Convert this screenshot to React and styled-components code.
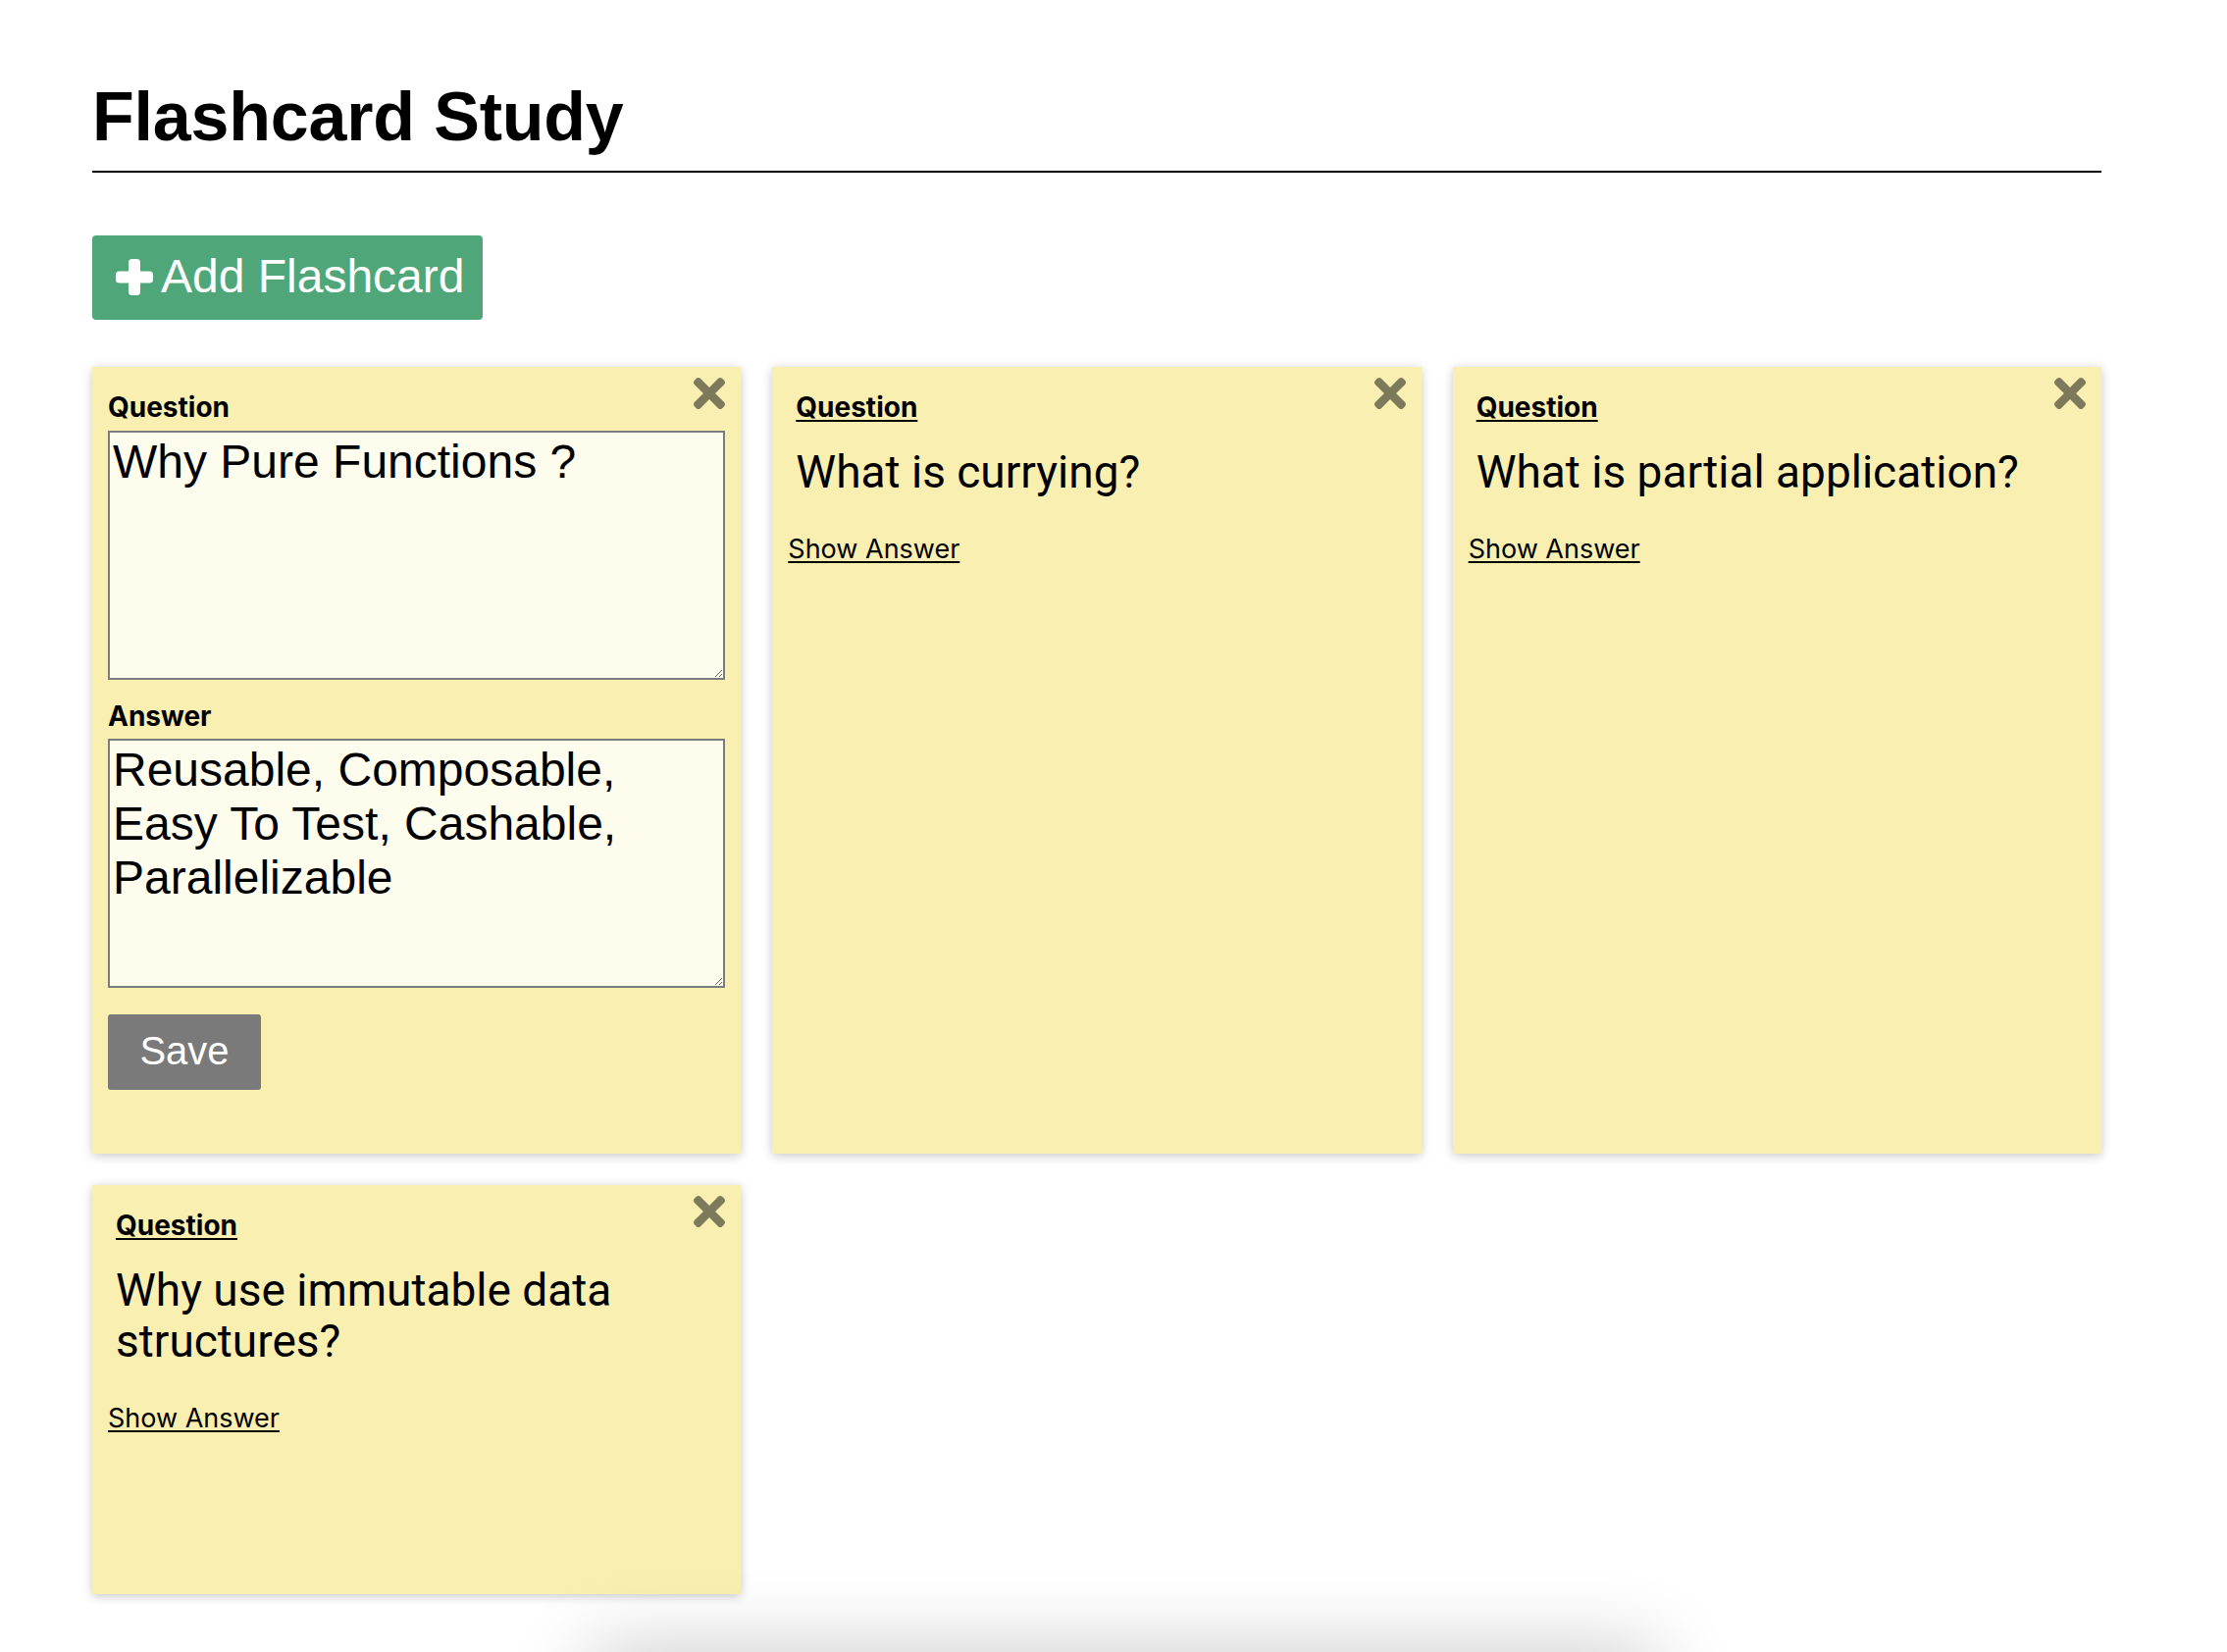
import React, { useState } from "react";
import styled, { createGlobalStyle } from "styled-components";

const GlobalStyle = createGlobalStyle`
  html, body {
    margin: 0;
    padding: 0;
    background: #ffffff;
  }
  body {
    font-family: Inter, "Liberation Sans", sans-serif;
    color: #000000;
  }
  * {
    box-sizing: border-box;
  }
`;

const initialCards = [
  {
    id: 1,
    question: "Why Pure Functions ?",
    answer: "Reusable, Composable, Easy To Test, Cashable, Parallelizable",
    editing: true,
  },
  {
    id: 2,
    question: "What is currying?",
    answer: "Turning a function of many arguments into a chain of one-argument functions.",
  },
  {
    id: 3,
    question: "What is partial application?",
    answer: "Fixing some arguments of a function to get a new one.",
  },
  {
    id: 4,
    question: "Why use immutable data structures?",
    answer: "Predictable state, safe sharing, cheap change detection.",
  },
];

const TimesIcon = () => (
  <svg width="32" height="32" viewBox="0 80 352 352" aria-hidden="true">
    <path
      fill="currentColor"
      d="M242.72 256l100.07-100.07c12.28-12.28 12.28-32.19 0-44.48l-22.24-22.24c-12.28-12.28-32.19-12.28-44.48 0L176 189.28 75.93 89.21c-12.28-12.28-32.19-12.28-44.48 0L9.21 111.45c-12.28 12.28-12.28 32.19 0 44.48L109.28 256 9.21 356.07c-12.28 12.28-12.28 32.19 0 44.48l22.24 22.24c12.28 12.28 32.2 12.28 44.48 0L176 322.72l100.07 100.07c12.28 12.28 32.2 12.28 44.48 0l22.24-22.24c12.28-12.28 12.28-32.19 0-44.48L242.72 256z"
    />
  </svg>
);

const PlusIcon = () => (
  <svg width="38" height="37" viewBox="0 0 38 37" aria-hidden="true">
    <rect x="13" y="0" width="12" height="37" rx="3.5" fill="currentColor" />
    <rect x="0" y="12.5" width="38" height="12" rx="3.5" fill="currentColor" />
  </svg>
);

const Card = ({ card, onRemove, onSave }) => {
  const [question, setQuestion] = useState(card.question);
  const [answer, setAnswer] = useState(card.answer);
  const [showAnswer, setShowAnswer] = useState(false);

  return (
    <CardBox>
      <CloseButton onClick={() => onRemove(card.id)} aria-label="Delete">
        <TimesIcon />
      </CloseButton>
      {card.editing ? (
        <EditForm onSubmit={(e) => { e.preventDefault(); onSave(card.id, question, answer); }}>
          <Label as="label">Question</Label>
          <TextArea value={question} onChange={(e) => setQuestion(e.target.value)} />
          <Label as="label" $gap>Answer</Label>
          <TextArea value={answer} onChange={(e) => setAnswer(e.target.value)} />
          <SaveButton type="submit">Save</SaveButton>
        </EditForm>
      ) : (
        <>
          <QuestionBlock>
            <Label $link>{showAnswer ? "Answer" : "Question"}</Label>
            <QuestionText>{showAnswer ? card.answer : card.question}</QuestionText>
          </QuestionBlock>
          <ShowAnswer onClick={() => setShowAnswer(!showAnswer)}>
            {showAnswer ? "Show Question" : "Show Answer"}
          </ShowAnswer>
        </>
      )}
    </CardBox>
  );
};

const App = () => {
  const [cards, setCards] = useState(initialCards);

  const removeCard = (id) => setCards(cards.filter((c) => c.id !== id));
  const saveCard = (id, question, answer) =>
    setCards(cards.map((c) => (c.id === id ? { ...c, question, answer, editing: false } : c)));
  const addCard = () =>
    setCards([...cards, { id: Date.now(), question: "", answer: "", editing: true }]);

  return (
    <>
      <GlobalStyle />
      <Page>
        <Header>
          <Title>Flashcard Study</Title>
        </Header>
        <AddButton onClick={addCard}>
          <PlusIcon />
          <span>Add Flashcard</span>
        </AddButton>
        <CardGrid>
          {cards.map((card) => (
            <Card key={card.id} card={card} onRemove={removeCard} onSave={saveCard} />
          ))}
        </CardGrid>
      </Page>
      <BottomShadow />
    </>
  );
};

export default App;

const Page = styled.div`
  padding: 79px 128px 60px 94px;
`;

const Header = styled.header`
  border-bottom: 2px solid #000000;
  padding-bottom: 15px;
`;

const Title = styled.h1`
  margin: 0;
  font-family: "Liberation Sans", Arial, sans-serif;
  font-size: 70px;
  font-weight: 700;
  letter-spacing: -0.2px;
  line-height: normal;
`;

const AddButton = styled.button`
  display: inline-flex;
  align-items: center;
  gap: 8px;
  margin-top: 64px;
  height: 86px;
  padding: 0 18px 4px 24px;
  border: none;
  border-radius: 4px;
  background: #4fa779;
  color: #ffffff;
  font-family: "Liberation Sans", Arial, sans-serif;
  font-size: 48px;
  cursor: pointer;
  svg {
    margin-top: 3px;
  }
`;

const CardGrid = styled.div`
  display: grid;
  grid-template-columns: repeat(3, 1fr);
  gap: 32px;
  margin-top: 48px;
`;

const CardBox = styled.div`
  position: relative;
  min-height: 417px;
  padding: 24px 16px;
  background: #f9efb1;
  box-shadow: 0 2px 10px rgba(0, 0, 0, 0.22);
`;

const CloseButton = styled.button`
  position: absolute;
  top: 11px;
  right: 16px;
  padding: 0;
  border: none;
  background: none;
  color: #7d7a5c;
  line-height: 0;
  cursor: pointer;
`;

const Label = styled.div`
  display: block;
  margin: ${(p) => (p.$gap ? "20px 0 6px" : "0 0 7px")};
  font-family: Inter, "Liberation Sans", sans-serif;
  font-size: 28px;
  font-weight: 700;
  text-decoration: ${(p) => (p.$link ? "underline" : "none")};
  text-decoration-thickness: 2px;
  text-underline-offset: 3px;
`;

const EditForm = styled.form`
  padding-bottom: 41px;
`;

const TextArea = styled.textarea`
  display: block;
  width: 100%;
  height: 254px;
  padding: 2px 3px;
  border: 2px solid #7c7c7c;
  background: #fefcec;
  color: #000000;
  font-family: "Liberation Sans", Arial, sans-serif;
  font-size: 48px;
  line-height: normal;
  outline: none;
`;

const SaveButton = styled.button`
  display: block;
  margin-top: 27px;
  width: 156px;
  height: 77px;
  padding: 0 0 2px;
  border: none;
  border-radius: 3px;
  background: #7a7a7a;
  color: #ffffff;
  font-family: "Liberation Sans", Arial, sans-serif;
  font-size: 40px;
  cursor: pointer;
`;

const QuestionBlock = styled.div`
  padding: 0 8px;
  margin-bottom: 36px;
`;

const QuestionText = styled.div`
  margin-top: 23px;
  font-family: Roboto, "Liberation Sans", sans-serif;
  font-size: 46px;
  line-height: 52px;
`;

const ShowAnswer = styled.a`
  display: inline-block;
  font-family: Inter, "Liberation Sans", sans-serif;
  font-size: 27px;
  color: #000000;
  text-decoration: underline;
  text-underline-offset: 3px;
  cursor: pointer;
`;

const BottomShadow = styled.div`
  position: fixed;
  left: 620px;
  top: 1700px;
  width: 1050px;
  height: 40px;
  box-shadow: 0 0 80px 20px rgba(0, 0, 0, 0.2);
  pointer-events: none;
`;
